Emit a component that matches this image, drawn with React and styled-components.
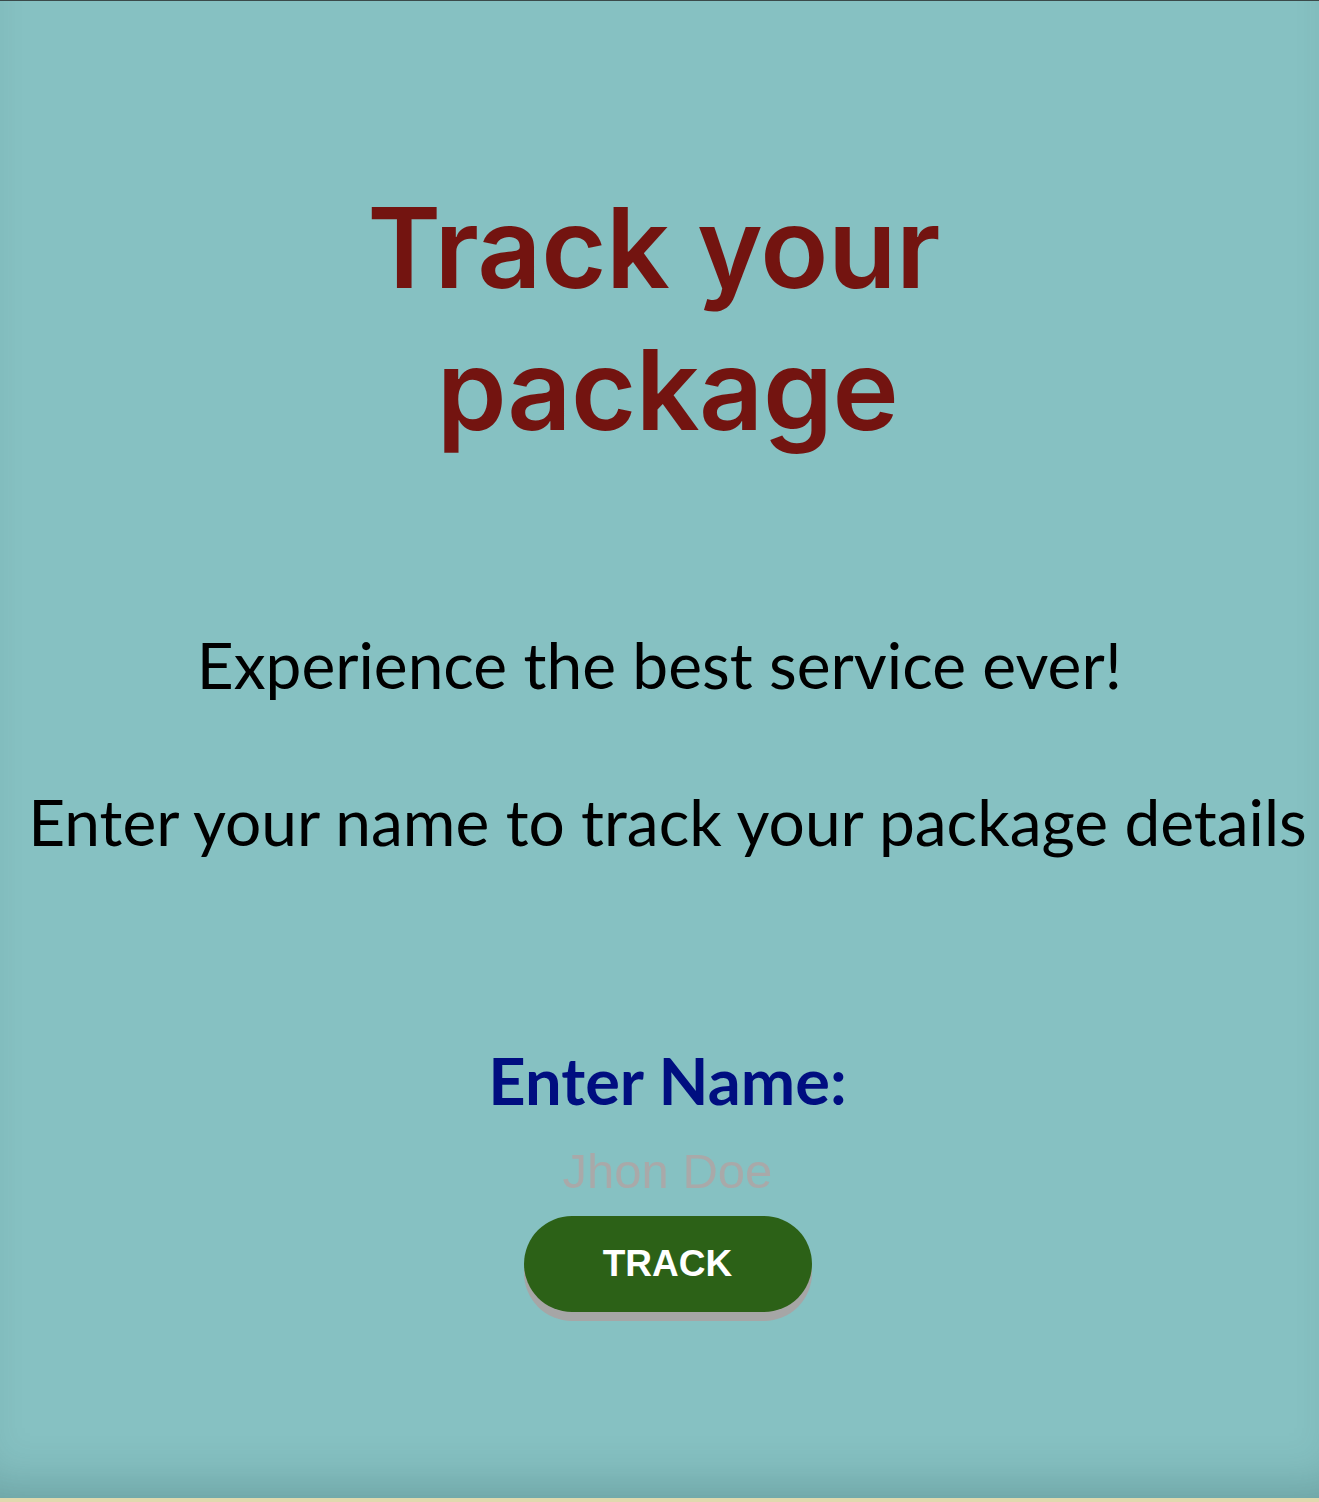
import React from "react";
import styled, { createGlobalStyle } from "styled-components";

const Global = createGlobalStyle`
  html, body { margin: 0; padding: 0; }
  body { background: #e0d9ae; }
`;

const Page = styled.main`
  box-sizing: border-box;
  height: 1498px;
  padding-left: 16px;
  background: #86c1c2;
  border-top: 1px solid #3a4a4a;
  box-shadow: inset 0 -40px 50px -30px rgba(30, 70, 70, 0.28);
  display: flex;
  flex-direction: column;
  align-items: center;
  text-align: center;
`;

const Title = styled.h1`
  margin: 175px 0 0;
  width: 640px;
  font-family: Inter, "Noto Sans", sans-serif;
  font-weight: 600;
  font-size: 112px;
  line-height: 142px;
  letter-spacing: -0.5px;
  color: #731410;
`;

const Lead = styled.p`
  margin: ${(p) => p.$top}px 0 0;
  font-family: Lato, "Noto Sans", sans-serif;
  font-weight: 400;
  font-size: 64px;
  line-height: 80px;
  color: #000;
  white-space: pre;
`;

const Label = styled.label`
  margin-top: 178px;
  font-family: Lato, "Noto Sans", sans-serif;
  font-weight: 700;
  font-size: 65px;
  line-height: 80px;
  color: #000e80;
`;

const NameInput = styled.input`
  margin-top: 21px;
  width: 400px;
  border: none;
  outline: none;
  background: transparent;
  text-align: center;
  font-family: "Liberation Sans", Arial, sans-serif;
  font-size: 49px;
  line-height: 60px;
  padding: 0;
  color: #333;
  &::placeholder { color: #a9a9a9; }
`;

const TrackButton = styled.button`
  margin-top: 15px;
  width: 288px;
  height: 96px;
  border: none;
  border-radius: 48px;
  background: #2c6117;
  box-shadow: 0 9px 0 #a6a6a6;
  color: #fff;
  font-family: "Liberation Sans", Arial, sans-serif;
  font-weight: 700;
  font-size: 37px;
  cursor: pointer;
`;

export default function App() {
  return (
    <>
      <Global />
      <Page>
        <Title>{"Track your\u00a0 package"}</Title>
        <Lead $top={165}>{"Experience the best service ever!\u00a0"}</Lead>
        <Lead $top={77}>Enter your name to track your package details</Lead>
        <Label htmlFor="name">Enter Name:</Label>
        <NameInput id="name" placeholder="Jhon Doe" />
        <TrackButton>TRACK</TrackButton>
      </Page>
    </>
  );
}
